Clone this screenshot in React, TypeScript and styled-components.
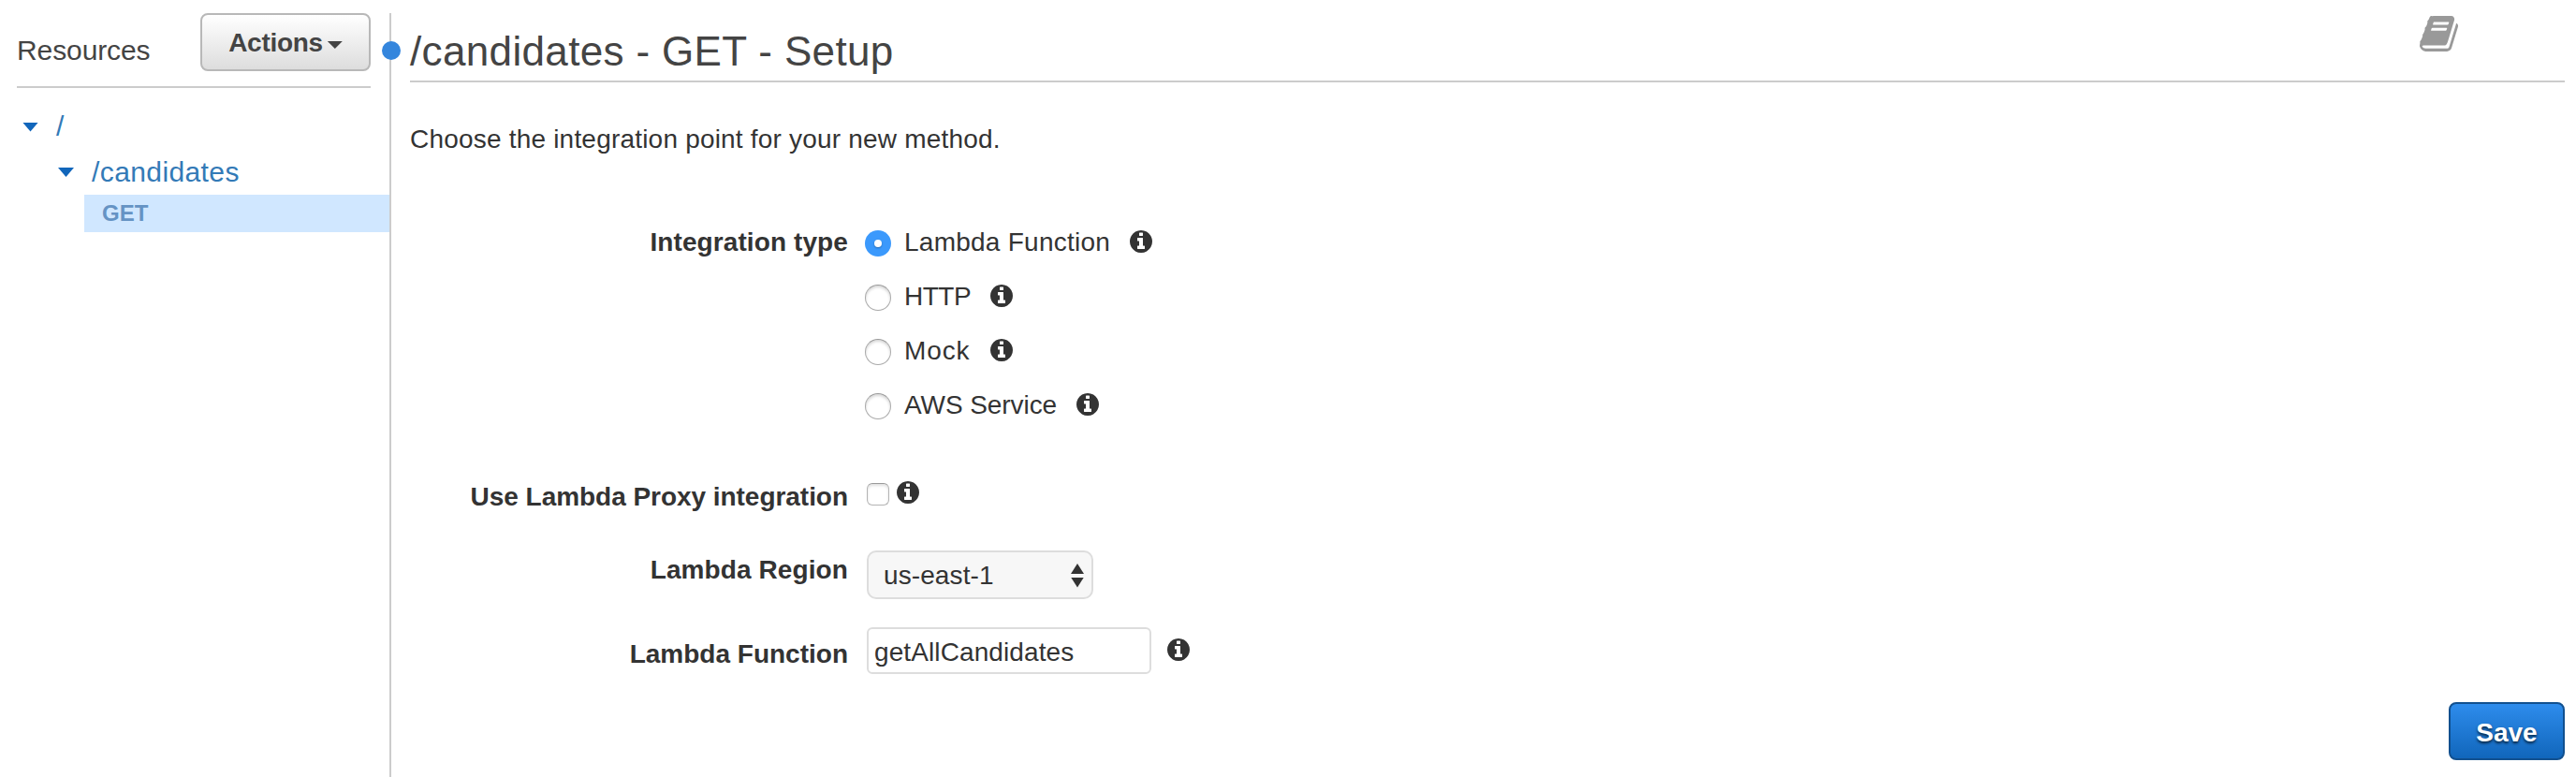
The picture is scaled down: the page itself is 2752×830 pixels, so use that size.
import React from "react";
import styled, { createGlobalStyle, css } from "styled-components";

const GlobalStyle = createGlobalStyle`
  * { box-sizing: border-box; }
  body {
    margin: 0;
    background: #fff;
    color: #333;
    font-family: "Liberation Sans", Arial, Helvetica, sans-serif;
    font-size: 28px;
  }
  button, input { font-family: inherit; }
`;

const Page = styled.div`
  display: flex;
  width: 2752px;
  height: 830px;
  padding-top: 14px;
  overflow: hidden;
`;

const Sidebar = styled.aside`
  width: 418px;
  flex: none;
  position: relative;
  border-right: 2px solid #ccc;
`;

const DragHandle = styled.span`
  position: absolute;
  top: 30px;
  right: -12px;
  width: 20px;
  height: 20px;
  border-radius: 50%;
  background: #3486dd;
`;

const SidebarHeader = styled.header`
  display: flex;
  justify-content: space-between;
  align-items: flex-start;
  height: 80px;
  margin: 0 20px 0 18px;
  border-bottom: 2px solid #ccc;
`;

const SidebarTitle = styled.h2`
  margin: 20px 0 0;
  font-size: 30px;
  font-weight: 400;
  line-height: 40px;
  letter-spacing: -0.1px;
  color: #444;
`;

const buttonBase = css`
  display: flex;
  align-items: center;
  justify-content: center;
  height: 62px;
  padding: 0;
  border-radius: 8px;
  font-size: 28px;
  font-weight: 700;
  line-height: 34px;
`;

const Caret = styled.span<{ $w: number; $h: number; $drop?: number }>`
  flex: none;
  width: ${(p) => p.$w}px;
  height: ${(p) => p.$h}px;
  margin-top: ${(p) => p.$drop ?? 0}px;
  background: currentColor;
  clip-path: polygon(0 0, 100% 0, 50% 100%);
`;

const ActionsButton = styled.button`
  ${buttonBase}
  width: 182px;
  gap: 5px;
  padding-top: 2px;
  border: 2px solid #b8b8b8;
  background: linear-gradient(#fff, #ddd);
  color: #444;
  letter-spacing: -0.3px;
`;

const SaveButton = styled.button`
  ${buttonBase}
  width: 124px;
  padding-top: 3px;
  border: 2px solid #11508f;
  background: linear-gradient(#2e8cec, #1166bb);
  color: #fff;
  text-shadow: 0 2px 3px rgba(0, 0, 0, 0.7);
`;

const Tree = styled.nav`
  padding-top: 16px;
`;

const TreeRow = styled.div<{ $indent: number }>`
  display: flex;
  align-items: center;
  gap: 19px;
  height: 49px;
  padding-left: ${(p) => p.$indent}px;
  color: #1166bb;
`;

const TreeLink = styled.a`
  font-size: 30px;
  line-height: 49px;
  letter-spacing: 0.4px;
  color: #337ab7;
`;

const MethodRow = styled.div`
  height: 40px;
  margin-left: 90px;
  padding-left: 19px;
  background: #d0e7ff;
  color: #6593c4;
  font-size: 24px;
  font-weight: 700;
  line-height: 39px;
`;

const Main = styled.main`
  display: flex;
  flex-direction: column;
  flex: 1;
  padding: 0 12px 18px 20px;
`;

const MainHeader = styled.header`
  display: flex;
  justify-content: space-between;
  height: 74px;
  padding-right: 114px;
  border-bottom: 2px solid #ccc;
`;

const Title = styled.h1`
  margin: 16px 0 0;
  font-size: 44px;
  font-weight: 400;
  line-height: 50px;
  letter-spacing: 0.35px;
  color: #444;
`;

const BookSvg = styled.svg`
  width: 41px;
  height: 38px;
  margin-top: 3px;
  fill: #999;
`;

const Intro = styled.p`
  margin: 43px 0 0;
  line-height: 36px;
  letter-spacing: 0.2px;
`;

const Form = styled.form`
  display: flex;
  flex-direction: column;
  margin-top: 73px;
`;

const Field = styled.div<{ $height: number }>`
  display: flex;
  height: ${(p) => p.$height}px;
`;

const Label = styled.label<{ $top?: number; $spacing?: number }>`
  width: 468px;
  flex: none;
  margin: ${(p) => p.$top ?? 0}px 20px 0 0;
  text-align: right;
  font-weight: 700;
  line-height: 38px;
  letter-spacing: ${(p) => p.$spacing ?? 0}px;
`;

const Options = styled.div`
  display: flex;
  flex-direction: column;
  gap: 20px;
  margin-left: -2px;
`;

const Option = styled.label<{ $spacing: number }>`
  display: flex;
  align-items: flex-start;
  height: 38px;
  line-height: 38px;
  letter-spacing: ${(p) => p.$spacing}px;
`;

const Radio = styled.span<{ $checked?: boolean }>`
  display: flex;
  align-items: center;
  justify-content: center;
  width: 28px;
  height: 28px;
  margin: 6px 14px 0 0;
  border-radius: 50%;
  ${(p) =>
    p.$checked
      ? css`
          background: #3b99fc;
          &::after {
            content: "";
            width: 8px;
            height: 8px;
            border-radius: 50%;
            background: #fff;
            box-shadow: 0 1px 2px rgba(0, 0, 0, 0.3);
          }
        `
      : css`
          border: 1px solid #aaa;
          border-top-color: #999;
          box-shadow: inset 0 2px 3px rgba(0, 0, 0, 0.16);
        `}
`;

const InfoSvg = styled.svg<{ $top: number; $left: number }>`
  flex: none;
  width: 24px;
  height: 24px;
  margin: ${(p) => p.$top}px 0 0 ${(p) => p.$left}px;
  fill: #333;
`;

const Checkbox = styled.span`
  width: 24px;
  height: 24px;
  margin-top: 4px;
  border: 1px solid #b4b4b4;
  border-top-color: #999;
  border-radius: 6px;
  box-shadow: inset 0 2px 3px rgba(0, 0, 0, 0.12);
`;

const Select = styled.div`
  display: flex;
  align-items: center;
  justify-content: space-between;
  width: 242px;
  height: 52px;
  padding: 1px 8px 0 16px;
  border: 2px solid #ddd;
  border-radius: 10px;
  background: #f7f7f7;
  letter-spacing: 0.1px;
`;

const Stepper = styled.span`
  display: flex;
  flex-direction: column;
  gap: 4px;

  ${Caret}:first-child {
    transform: rotate(180deg);
  }
`;

const TextInput = styled.input`
  width: 304px;
  height: 50px;
  padding: 3px 6px 0;
  border: 2px solid #ddd;
  border-radius: 6px;
  background: #fff;
  color: #333;
  font-size: 28px;
  letter-spacing: 0.1px;
`;

const Footer = styled.footer`
  display: flex;
  justify-content: flex-end;
  margin-top: auto;
`;

const Info = ({ top, left }: { top: number; left: number }) => (
  <InfoSvg $top={top} $left={left} viewBox="128 128 1536 1536">
    <path d="M1152 1376v-160q0-14-9-23t-23-9h-96v-512q0-14-9-23t-23-9h-320q-14 0-23 9t-9 23v160q0 14 9 23t23 9h96v320h-96q-14 0-23 9t-9 23v160q0 14 9 23t23 9h448q14 0 23-9t9-23zm-128-896v-160q0-14-9-23t-23-9h-192q-14 0-23 9t-9 23v160q0 14 9 23t23 9h192q14 0 23-9t9-23zm640 416q0 209-103 385.5t-279.5 279.5-385.5 103-385.5-103-279.5-279.5-103-385.5 103-385.5 279.5-279.5 385.5-103 385.5 103 279.5 279.5 103 385.5z" />
  </InfoSvg>
);

const Book = () => (
  <BookSvg viewBox="64 128 1664 1536">
    <path d="M1703 478q40 57 18 129l-275 906q-19 64-76.5 107.5t-122.5 43.5h-923q-77 0-148.5-53.5t-99.5-131.5q-24-67-2-127 0-4 3-27t4-37q1-8-3-21.5t-3-19.5q2-11 8-21t16.5-23.5 16.5-23.5q23-38 45-91.5t30-91.5q3-10 .5-30t-.5-28q3-11 17-28t17-23q21-36 42-92t25-90q1-9-2.5-32t.5-28q4-13 22-30.5t22-22.5q19-26 42.5-84.5t27.5-96.5q1-8-3-25.5t-2-26.5q2-8 9-18t18-23 17-21q8-12 16.5-30.5t15-35 16-36 19.5-32 26.5-23.5 36-11.5 47.5 5.5l-1 3q38-9 51-9h761q74 0 114 56t18 130l-274 906q-36 119-71.5 153.5t-128.5 34.5h-869q-27 0-38 15-11 16-1 43 24 70 144 70h923q29 0 56-15.5t35-41.5l300-987q7-22 5-57 38 15 59 43zm-1064 2q-4 13 2 22.5t20 9.5h608q13 0 25.5-9.5t16.5-22.5l21-64q4-13-2-22.5t-20-9.5h-608q-13 0-25.5 9.5t-16.5 22.5zm-83 256q-4 13 2 22.5t20 9.5h608q13 0 25.5-9.5t16.5-22.5l21-64q4-13-2-22.5t-20-9.5h-608q-13 0-25.5 9.5t-16.5 22.5z" />
  </BookSvg>
);

const integrationTypes = [
  { name: "Lambda Function", spacing: 0.25 },
  { name: "HTTP", spacing: -0.5 },
  { name: "Mock", spacing: 0.9 },
  { name: "AWS Service", spacing: -0.07 },
];

export default function App() {
  return (
    <Page>
      <GlobalStyle />
      <Sidebar>
        <SidebarHeader>
          <SidebarTitle>Resources</SidebarTitle>
          <ActionsButton type="button">
            Actions
            <Caret $w={16} $h={8} $drop={4} />
          </ActionsButton>
        </SidebarHeader>
        <Tree>
          <TreeRow $indent={24}>
            <Caret $w={17} $h={10} $drop={2} />
            <TreeLink>/</TreeLink>
          </TreeRow>
          <TreeRow $indent={62}>
            <Caret $w={17} $h={10} $drop={1} />
            <TreeLink>/candidates</TreeLink>
          </TreeRow>
          <MethodRow>GET</MethodRow>
        </Tree>
        <DragHandle />
      </Sidebar>
      <Main>
        <MainHeader>
          <Title>/candidates - GET - Setup</Title>
          <Book />
        </MainHeader>
        <Intro>Choose the integration point for your new method.</Intro>
        <Form>
          <Field $height={272}>
            <Label $spacing={0.1}>Integration type</Label>
            <Options>
              {integrationTypes.map((type, index) => (
                <Option key={type.name} $spacing={type.spacing}>
                  <Radio $checked={index === 0} />
                  {type.name}
                  <Info top={6} left={21} />
                </Option>
              ))}
            </Options>
          </Field>
          <Field $height={76}>
            <Label $spacing={-0.04}>Use Lambda Proxy integration</Label>
            <Checkbox />
            <Info top={2} left={8} />
          </Field>
          <Field $height={82}>
            <Label $top={2} $spacing={0.1}>Lambda Region</Label>
            <Select>
              us-east-1
              <Stepper>
                <Caret $w={14} $h={11} />
                <Caret $w={14} $h={11} />
              </Stepper>
            </Select>
          </Field>
          <Field $height={50}>
            <Label $top={10}>Lambda Function</Label>
            <TextInput defaultValue="getAllCandidates" />
            <Info top={12} left={17} />
          </Field>
        </Form>
        <Footer>
          <SaveButton type="button">Save</SaveButton>
        </Footer>
      </Main>
    </Page>
  );
}
